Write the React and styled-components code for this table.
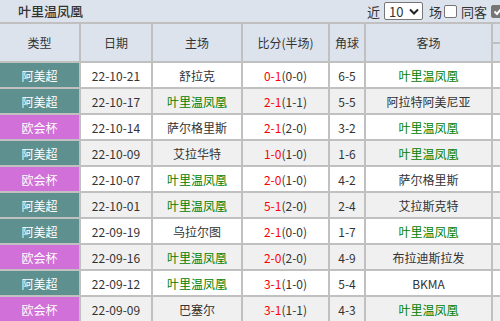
import React from "react";
import styled, { createGlobalStyle } from "styled-components";

const GlobalStyle = createGlobalStyle`
  html, body {
    margin: 0;
    padding: 0;
    background: #ffffff;
  }
  body {
    font-family: "Noto Sans CJK SC", "Noto Sans", sans-serif;
    font-size: 12px;
    color: #333333;
  }
`;

const Panel = styled.div`
  width: 500px;
  height: 321px;
  overflow: hidden;
  background: #dde3ec;
`;

const TitleBar = styled.div`
  height: 22px;
  display: flex;
  align-items: center;
  padding-left: 18px;
  border-bottom: 2px solid #c0c0c0;
`;

const Title = styled.div`
  font-size: 13px;
  font-weight: 500;
  color: #333;
  flex: 1;
  line-height: 22px;
  margin-top: -1px;
`;

const Controls = styled.div`
  display: flex;
  align-items: center;
  gap: 4px;
  font-size: 13px;
  color: #333;
  margin-right: -4px;
`;

const Select = styled.div`
  width: 30px;
  height: 16px;
  border: 1px solid #767676;
  border-radius: 2px;
  background: #fff;
  display: flex;
  align-items: center;
  justify-content: space-between;
  padding: 0 3px 0 4px;
  box-sizing: content-box;
  font-size: 13px;
  margin-right: 2px;
`;

const Check = styled.div`
  width: 11px;
  height: 11px;
  border: 1px solid #767676;
  border-radius: 2px;
  background: ${(p) => (p.checked ? "#767676" : "#fff")};
  display: flex;
  align-items: center;
  justify-content: center;
  margin-left: ${(p) => (p.checked ? "0" : "-2px")};
`;

const Grid = styled.div`
  display: grid;
  grid-template-columns: 79px 70px 88px 85px 34px 125px 10px;
  grid-auto-rows: 24px;
  grid-template-rows: 37px;
  column-gap: 2px;
  row-gap: 2px;
  background: #c0c0c0;
`;

const HeadCell = styled.div`
  background: #dde3ec;
  display: flex;
  align-items: center;
  justify-content: center;
  font-size: 12px;
  color: #333;
`;

const SplitHead = styled.div`
  background: #c0c0c0;
  display: grid;
  grid-template-rows: 18px 17px;
  row-gap: 2px;
  & > div {
    background: #dde3ec;
  }
`;

const Cell = styled.div`
  background: ${(p) => (p.alt ? "#f0f0f0" : "#ffffff")};
  display: flex;
  align-items: center;
  justify-content: center;
  font-size: 12px;
  color: ${(p) => (p.home ? "#008000" : "#333")};
  white-space: nowrap;
`;

const TypeCell = styled(Cell)`
  background: ${(p) => (p.cup ? "#d070d8" : "#5f9090")};
  color: #ffffff;
`;

const Red = styled.span`
  color: #ff0000;
`;

const TEAM = "叶里温凤凰";

const rows = [
  ["阿美超", "22-10-21", "舒拉克", "0-1", "(0-0)", "6-5", TEAM],
  ["阿美超", "22-10-17", TEAM, "2-1", "(1-1)", "5-5", "阿拉特阿美尼亚"],
  ["欧会杯", "22-10-14", "萨尔格里斯", "2-1", "(2-0)", "3-2", TEAM],
  ["阿美超", "22-10-09", "艾拉华特", "1-0", "(1-0)", "1-6", TEAM],
  ["欧会杯", "22-10-07", TEAM, "2-0", "(1-0)", "4-2", "萨尔格里斯"],
  ["阿美超", "22-10-01", TEAM, "5-1", "(2-0)", "2-4", "艾拉斯克特"],
  ["阿美超", "22-09-19", "乌拉尔图", "2-1", "(0-0)", "1-7", TEAM],
  ["欧会杯", "22-09-16", TEAM, "2-0", "(2-0)", "4-9", "布拉迪斯拉发"],
  ["阿美超", "22-09-12", TEAM, "3-1", "(1-0)", "5-4", "BKMA"],
  ["欧会杯", "22-09-09", "巴塞尔", "3-1", "(1-1)", "4-3", TEAM],
];

const Chevron = () => (
  <svg width="10" height="7" viewBox="0 0 10 7">
    <path d="M1 1.5 L5 5.5 L9 1.5" fill="none" stroke="#222" strokeWidth="2" />
  </svg>
);

const Tick = () => (
  <svg width="10" height="9" viewBox="0 0 10 9">
    <path d="M1.5 4.5 L4 7 L8.5 1.5" fill="none" stroke="#fff" strokeWidth="2" />
  </svg>
);

const App = () => (
  <Panel>
    <GlobalStyle />
    <TitleBar>
      <Title>{TEAM}</Title>
      <Controls>
        <span>近</span>
        <Select>
          <span>10</span>
          <Chevron />
        </Select>
        <span>场</span>
        <Check />
        <span>同客</span>
        <Check checked>
          <Tick />
        </Check>
      </Controls>
    </TitleBar>
    <Grid>
      <HeadCell>类型</HeadCell>
      <HeadCell>日期</HeadCell>
      <HeadCell>主场</HeadCell>
      <HeadCell>比分(半场)</HeadCell>
      <HeadCell>角球</HeadCell>
      <HeadCell>客场</HeadCell>
      <SplitHead>
        <div />
        <div />
      </SplitHead>
      {rows.map((r, i) => {
        const alt = i % 2 === 1;
        return (
          <React.Fragment key={i}>
            <TypeCell cup={r[0] === "欧会杯"}>{r[0]}</TypeCell>
            <Cell alt={alt}>{r[1]}</Cell>
            <Cell alt={alt} home={r[2] === TEAM}>{r[2]}</Cell>
            <Cell alt={alt}>
              <Red>{r[3]}</Red>
              {r[4]}
            </Cell>
            <Cell alt={alt}>{r[5]}</Cell>
            <Cell alt={alt} home={r[6] === TEAM}>{r[6]}</Cell>
            <Cell alt={alt} />
          </React.Fragment>
        );
      })}
    </Grid>
  </Panel>
);

export default App;
